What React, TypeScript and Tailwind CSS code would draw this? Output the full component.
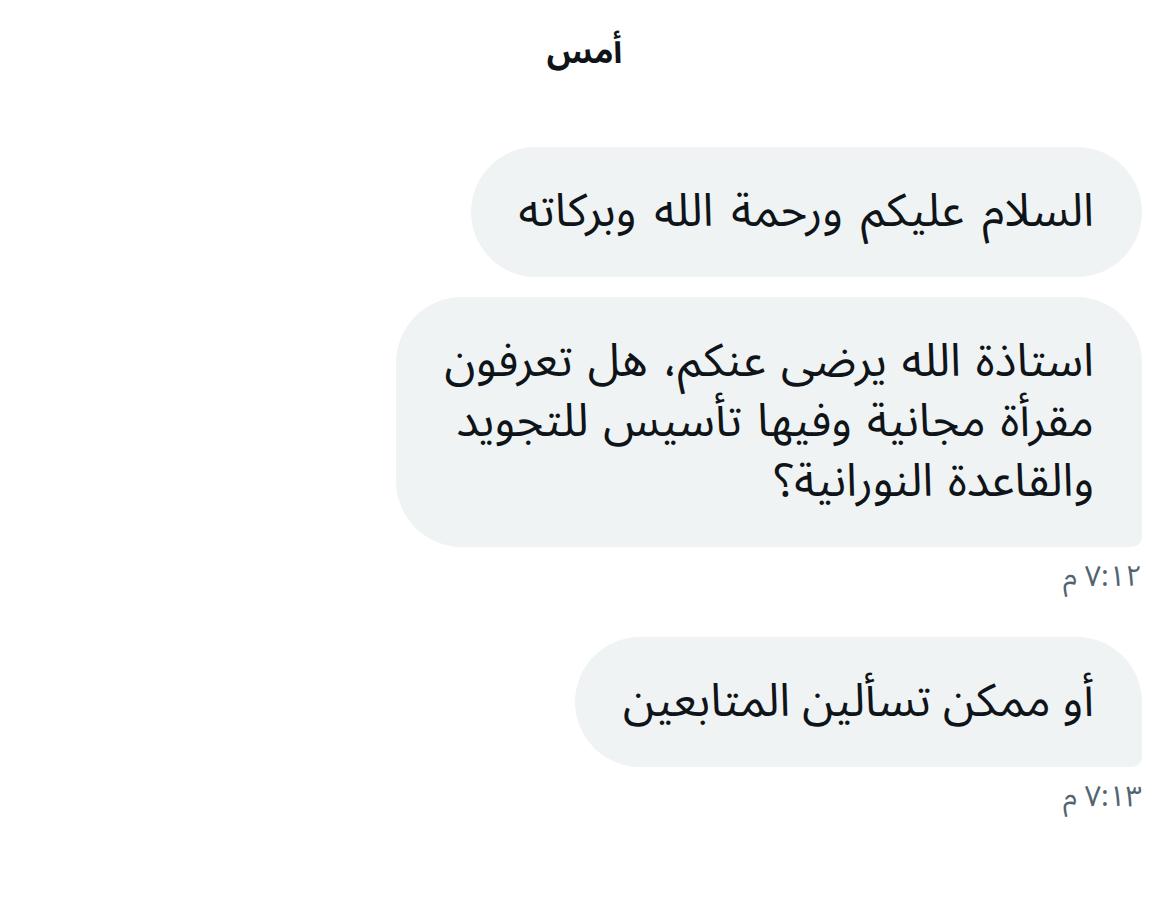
import React from "react";

const font = { fontFamily: '"Noto Sans Arabic", "Noto Sans", "DejaVu Sans", sans-serif' };

function Bubble({
  children,
  last,
  extra = "",
}: {
  children: React.ReactNode;
  last?: boolean;
  extra?: string;
}) {
  return (
    <div
      className={`w-fit bg-[#eff3f4] text-[#0f1419] text-[46px] leading-[60px] px-[48px] py-[35px] rounded-tl-[66px] rounded-bl-[66px] rounded-tr-[66px] ${
        last ? "rounded-br-[10px]" : "rounded-br-[66px]"
      } ${extra}`}
    >
      {children}
    </div>
  );
}

export default function App() {
  return (
    <div dir="rtl" style={font} className="w-[1169px] h-[910px] bg-white flex flex-col">
      <div className="pt-[30px] text-center text-[33px] leading-[46px] font-bold text-[#0f1419]">أمس</div>
      <div className="flex flex-col items-start pr-[27px] mt-[71px]">
        <Bubble extra="[word-spacing:6px]">السلام عليكم ورحمة الله وبركاته</Bubble>
        <div className="h-[20px]" />
        <Bubble last extra="[word-spacing:3px]">
          استاذة الله يرضى عنكم، هل تعرفون
          <br />
          مقرأة مجانية وفيها تأسيس للتجويد
          <br />
          والقاعدة النورانية؟
        </Bubble>
        <div className="mt-[10px] text-[29px] leading-[40px] text-[#536471]">٧:١٢ م</div>
        <div className="h-[40px]" />
        <Bubble last>أو ممكن تسألين المتابعين</Bubble>
        <div className="mt-[10px] text-[29px] leading-[40px] text-[#536471]">٧:١٣ م</div>
      </div>
    </div>
  );
}
